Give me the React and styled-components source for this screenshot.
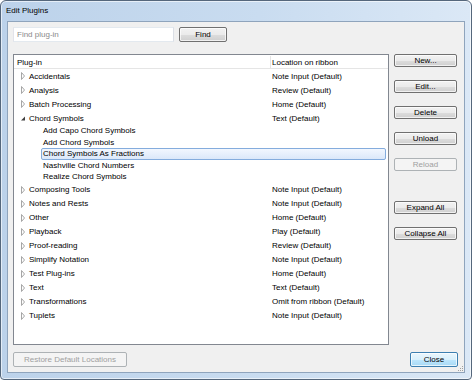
import React from 'react'
import styled, { createGlobalStyle, css } from 'styled-components'

const plugins = [
  { name: 'Accidentals', location: 'Note Input (Default)' },
  { name: 'Analysis', location: 'Review (Default)' },
  { name: 'Batch Processing', location: 'Home (Default)' },
  {
    name: 'Chord Symbols',
    location: 'Text (Default)',
    open: true,
    children: [
      'Add Capo Chord Symbols',
      'Add Chord Symbols',
      'Chord Symbols As Fractions',
      'Nashville Chord Numbers',
      'Realize Chord Symbols'
    ]
  },
  { name: 'Composing Tools', location: 'Note Input (Default)' },
  { name: 'Notes and Rests', location: 'Note Input (Default)' },
  { name: 'Other', location: 'Home (Default)' },
  { name: 'Playback', location: 'Play (Default)' },
  { name: 'Proof-reading', location: 'Review (Default)' },
  { name: 'Simplify Notation', location: 'Note Input (Default)' },
  { name: 'Test Plug-ins', location: 'Home (Default)' },
  { name: 'Text', location: 'Text (Default)' },
  { name: 'Transformations', location: 'Omit from ribbon (Default)' },
  { name: 'Tuplets', location: 'Note Input (Default)' }
]

const selected = 'Chord Symbols As Fractions'

function Expander({ open }) {
  if (open) {
    return (
      <Arrow viewBox="0 0 6 8">
        <path d="M5 2.5 L5 6.5 L1 6.5 Z" fill="#404040" />
      </Arrow>
    )
  }
  return (
    <Arrow viewBox="0 0 6 8">
      <path d="M1.5 0.5 L4.5 4 L1.5 7.5 Z" fill="none" stroke="#a6a6a6" strokeWidth="1" />
    </Arrow>
  )
}

export default function App() {
  return (
    <>
      <GlobalStyle />
      <Window>
        <TitleBar>Edit Plugins</TitleBar>
        <Client>
          <SearchRow>
            <SearchInput placeholder="Find plug-in" />
            <Button $width={48} $height={15}>Find</Button>
          </SearchRow>

          <Body>
            <ListBox>
              <HeaderRow>
                <HeaderCell>Plug-in</HeaderCell>
                <HeaderCell>Location on ribbon</HeaderCell>
              </HeaderRow>
              {plugins.map((p) => (
                <React.Fragment key={p.name}>
                  <Row $indent={0}>
                    <NameCell>
                      <Expander open={p.open} />
                      {p.name}
                    </NameCell>
                    <Location>{p.location}</Location>
                  </Row>
                  {p.open && p.children.map((c) => (
                    <Row key={c} $indent={26} $child $selected={c === selected}>
                      <ChildCell>{c}</ChildCell>
                      <Location />
                    </Row>
                  ))}
                </React.Fragment>
              ))}
            </ListBox>

            <ButtonColumn>
              <Button>New...</Button>
              <Button>Edit...</Button>
              <Button>Delete</Button>
              <Button>Unload</Button>
              <Button disabled>Reload</Button>
              <Spacer />
              <Button>Expand All</Button>
              <Button>Collapse All</Button>
            </ButtonColumn>
          </Body>

          <Footer>
            <Button disabled $width={114} $height={15}>Restore Default Locations</Button>
            <Button $default $width={48} $height={15}>Close</Button>
          </Footer>
          <SizeGrip viewBox="0 0 8 8">
            {[[6, 2], [6, 4], [4, 4], [6, 6], [4, 6], [2, 6]].map(([x, y]) => (
              <rect key={`${x}-${y}`} x={x} y={y} width="1" height="1" fill="#a0a0a0" />
            ))}
          </SizeGrip>
        </Client>
      </Window>
    </>
  )
}

const GlobalStyle = createGlobalStyle`
  body {
    margin: 0;
    background: #ffffff;
    font-family: "Liberation Sans", Arial, sans-serif;
    font-size: 8px;
    color: #000;
  }
  * { box-sizing: border-box; }
`

const Window = styled.div`
  width: 472px;
  height: 380px;
  display: flex;
  flex-direction: column;
  border: 1px solid #55677c;
  border-radius: 6px 6px 4px 4px;
  padding: 0 6px 6px 6px;
  background: linear-gradient(90deg, #bcd2ea 0%, #c9dcf0 55%, #dbe8f6 100%);
  box-shadow: inset 0 0 0 1px rgba(255, 255, 255, 0.6);
`

const TitleBar = styled.div`
  height: 21px;
  display: flex;
  align-items: center;
  padding-bottom: 1px;
  margin-left: -1px;
  font-size: 8px;
  color: #000;
`

const Client = styled.div`
  position: relative;
  flex: 1;
  display: flex;
  flex-direction: column;
  background: #f0f0f0;
  border: 1px solid #8fa4bc;
  padding: 5px 6px 5px 5px;
`

const SearchRow = styled.div`
  display: flex;
  align-items: center;
  gap: 5px;
`

const SearchInput = styled.input`
  width: 161px;
  height: 15px;
  border: 1px solid #abadb3;
  border-top-color: #e3e9ef;
  border-left-color: #e2e3ea;
  border-right-color: #dbdfe6;
  border-bottom-color: #e3e9ef;
  background: #fff;
  padding: 0 3px;
  font: inherit;
  outline: none;
  &::placeholder { color: #8a8a8a; }
`

const Button = styled.button`
  width: ${(p) => (p.$width ? `${p.$width}px` : '100%')};
  height: ${(p) => (p.$height ? `${p.$height}px` : '13px')};
  flex-shrink: 0;
  padding: 0;
  font: inherit;
  color: #000;
  border: 1px solid #707070;
  border-radius: 2px;
  background: linear-gradient(#f2f2f2 0%, #ebebeb 50%, #dddddd 51%, #cfcfcf 100%);
  box-shadow: inset 0 0 0 1px rgba(255, 255, 255, 0.7);
  ${(p) => p.$default && css`
    border-color: #3c7fb1;
    background: linear-gradient(#eaf6fd 0%, #d9f0fc 50%, #bee6fd 51%, #a7d9f5 100%);
  `}
  &:disabled {
    color: #a0a0a0;
    border-color: #adb2b5;
    background: #f4f4f4;
    box-shadow: none;
  }
`

const Body = styled.div`
  display: flex;
  gap: 5px;
  margin-top: 12px;
`

const ListBox = styled.div`
  width: 376px;
  height: 291px;
  border: 1px solid #828790;
  background: #fff;
  padding: 0 1px;
`

const HeaderRow = styled.div`
  display: grid;
  grid-template-columns: 255px 1fr;
  height: 14px;
  border-bottom: 1px solid #e5e5e5;
  margin: 0 -1px;
  padding: 1px 1px 0;
`

const HeaderCell = styled.div`
  display: flex;
  align-items: center;
  padding-left: 2px;
  & + & { border-left: 1px solid #e5e5e5; padding-left: 1px; }
`

const Row = styled.div`
  display: grid;
  grid-template-columns: ${(p) => 255 - p.$indent}px 1fr;
  height: ${(p) => (p.$child ? '11.5px' : '14px')};
  margin-left: ${(p) => p.$indent}px;
  margin-right: 1px;
  align-items: center;
  border: 1px solid transparent;
  border-radius: 2px;
  ${(p) => p.$selected && css`
    border-color: #84acdd;
    background: linear-gradient(#f2f7fe, #dbe8f9);
  `}
`

const NameCell = styled.div`
  display: flex;
  align-items: center;
  gap: 3px;
  padding-left: 4px;
  white-space: nowrap;
`

const ChildCell = styled.div`
  padding-left: 1px;
  white-space: nowrap;
`

const Location = styled.div`
  padding-left: 1px;
  white-space: nowrap;
`

const Arrow = styled.svg`
  width: 6px;
  height: 8px;
  flex-shrink: 0;
`

const ButtonColumn = styled.div`
  width: 63px;
  display: flex;
  flex-direction: column;
  gap: 13px;
`

const Spacer = styled.div`
  height: 4px;
`

const Footer = styled.div`
  display: flex;
  justify-content: space-between;
  margin-top: 7px;
`

const SizeGrip = styled.svg`
  position: absolute;
  right: 0;
  bottom: 0;
  width: 8px;
  height: 8px;
`
